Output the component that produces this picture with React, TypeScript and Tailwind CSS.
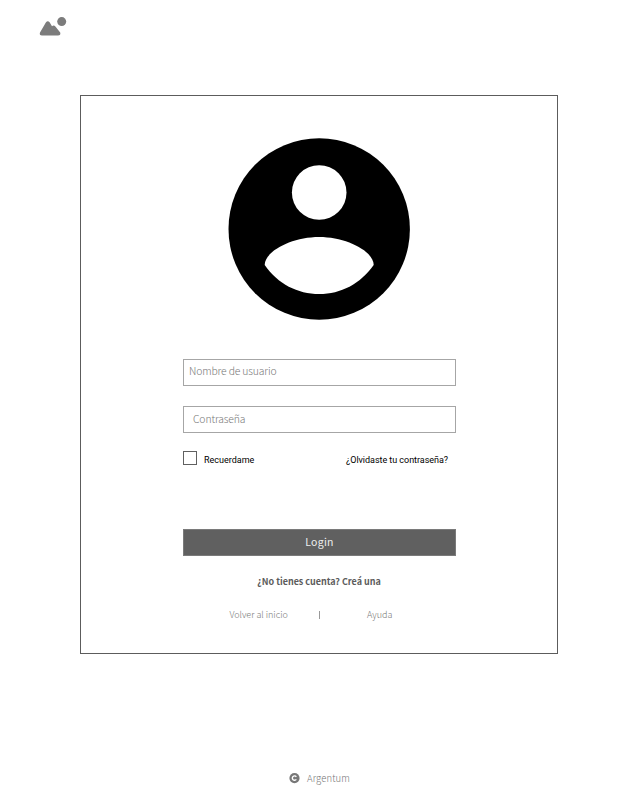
import React from 'react';

const sans = "font-['Noto_Sans_CJK_SC','Noto_Sans',sans-serif]";
const roboto = "font-['Roboto',sans-serif]";

function Logo() {
  return (
    <svg className="ml-[39px] block" width="28" height="20" viewBox="0 0 28 20" fill="#7c7c7c">
      <path d="M1 16.500 7 6.300Q8.800 4 10.600 6.300L13 10.200Q15 8.800 16.600 10.800L21.200 16.500Q22 19.500 19 19.500H3Q0 19.500 1 16.500Z" />
      <circle cx="22.700" cy="5.600" r="4.500" />
    </svg>
  );
}

function Avatar() {
  return (
    <svg className="mx-auto block" width="182" height="182" viewBox="0 0 182 182">
      <circle cx="91.200" cy="91" r="90.700" fill="#000" />
      <circle cx="91.200" cy="54.500" r="27.300" fill="#fff" />
      <path d="M91.200 99C118 99 145.700 113 145.700 127C132 146 113 156 91.200 156S50 146 36.700 127C36.700 113 64 99 91.200 99Z" fill="#fff" />
    </svg>
  );
}

export default function App() {
  return (
    <div className={`flex h-[797px] w-[635px] flex-col bg-white pt-4 ${sans}`}>
      <header className="h-[79px]">
        <Logo />
      </header>

      <main className="ml-[80px] h-[559px] w-[478px] border border-[#5c5c5c] pt-[42px]">
        <Avatar />
        <form className="ml-[102px] mt-[39px] w-[273px]" onSubmit={(e) => e.preventDefault()}>
          <label className="flex h-[27px] items-center border border-[#a6a6a6] pl-[5px] text-[10.4px] font-light leading-[12px] tracking-[-0.15px] text-[#777]">
            <span className="-mt-[3px] whitespace-nowrap">Nombre de usuario</span>
          </label>
          <label className="mt-[20px] flex h-[27px] items-center border border-[#a6a6a6] pl-[9px] text-[10.4px] font-light leading-[12px] tracking-[-0.15px] text-[#777]">
            <span className="-mt-[1px] whitespace-nowrap">Contraseña</span>
          </label>

          <div className={`mt-[18px] flex h-[14px] items-center text-[9px] leading-[14px] text-black ${roboto}`}>
            <span className="h-[14px] w-[14px] border border-[#606060]" />
            <span className="ml-[7px] mt-[3px] whitespace-nowrap">Recuerdame</span>
            <span className="ml-auto mr-[8px] mt-[3px] whitespace-nowrap tracking-[-0.04px]">¿Olvidaste tu contraseña?</span>
          </div>

          <button className="mt-[64px] flex h-[27px] w-full items-center justify-center border border-[#7a7a7a] bg-[#606060] text-[10.5px] leading-[11px] tracking-[0.3px] text-[#eee]">
            <span className="-mt-[3px]">Login</span>
          </button>
        </form>

        <p className="mt-[17px] text-center text-[9px] font-bold leading-[18px] tracking-[-0.02px] text-[#5c5c5c]">¿No tienes cuenta? Creá una</p>
        <nav className="mt-[15px] flex h-[18px] items-center pl-[148.4px] text-[9px] font-light leading-[18px] text-[#777]">
          <span className="w-[90px] whitespace-nowrap">Volver al inicio</span>
          <span className="h-[8px] w-px bg-[#999]" />
          <span className="ml-[46.6px]">Ayuda</span>
        </nav>
      </main>

      <footer className="mt-[115px] flex h-[18px] items-center pl-[289px] text-[9.5px] font-light leading-[18px] tracking-[0.1px] text-[#777]">
        <svg className="mr-[7px]" width="11" height="11" viewBox="0 0 11 11">
          <circle cx="5.500" cy="5.100" r="5.100" fill="#777" />
          <path d="M7.300 3.800A2.200 2.200 0 1 0 7.300 6.400" fill="none" stroke="#fff" strokeWidth="1.400" />
        </svg>
        <span>Argentum</span>
      </footer>
    </div>
  );
}
